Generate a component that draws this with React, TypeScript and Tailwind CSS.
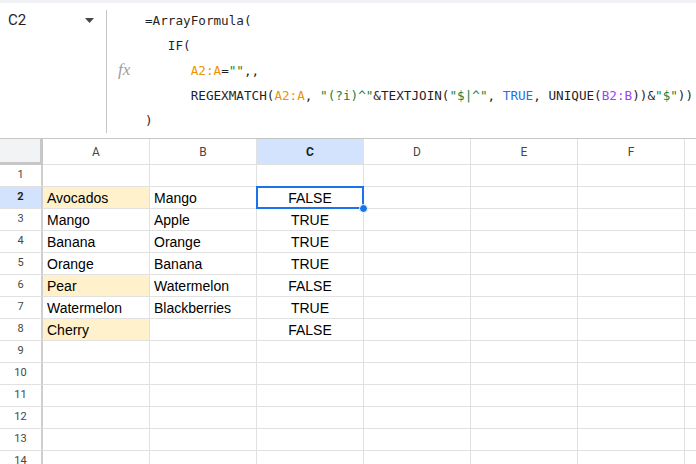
import React from 'react';

type Row = { a?: string; b?: string; c?: string; hl?: boolean };

const data: Row[] = [
  {},
  { a: 'Avocados', b: 'Mango', c: 'FALSE', hl: true },
  { a: 'Mango', b: 'Apple', c: 'TRUE' },
  { a: 'Banana', b: 'Orange', c: 'TRUE' },
  { a: 'Orange', b: 'Banana', c: 'TRUE' },
  { a: 'Pear', b: 'Watermelon', c: 'FALSE', hl: true },
  { a: 'Watermelon', b: 'Blackberries', c: 'TRUE' },
  { a: 'Cherry', c: 'FALSE', hl: true },
  {}, {}, {}, {}, {}, {},
];

const columns = ['A', 'B', 'C', 'D', 'E', 'F', 'G'];

const Ref: React.FC<{ children: React.ReactNode; color?: 'orange' | 'green' | 'blue' | 'purple' }> = ({ children, color }) => {
  const cls =
    color === 'orange' ? 'text-[#f09300]' :
    color === 'green' ? 'text-[#188038]' :
    color === 'blue' ? 'text-[#1a73e8]' :
    color === 'purple' ? 'text-[#a142f4]' : '';
  return <span className={cls}>{children}</span>;
};

const FormulaBar: React.FC = () => (
  <div className="flex h-[139px] border-t-[3px] border-b border-t-[#f0f2f5] border-b-[#c7c7c7] bg-white">
    <div className="w-[106px] h-[34px] flex items-center justify-between pl-[8px] pr-[12px]">
      <span className="text-[15px] text-[#1f1f1f]" style={{ fontFamily: 'Roboto, "Liberation Sans", sans-serif' }}>C2</span>
      <svg width="9" height="5" viewBox="0 0 9 5"><path d="M0 0h9L4.5 5z" fill="#444746" /></svg>
    </div>
    <div className="mt-[7px] h-[123px] w-px bg-[#c4c7c5]" />
    <div className="w-[38px] flex items-center pl-[11px] pb-[2px]">
      <span className="italic text-[17px] text-[#9aa0a6]" style={{ fontFamily: '"Liberation Serif", serif' }}>fx</span>
    </div>
    <pre
      className="pt-[5px] text-[12.65px] leading-[25px] text-[#1f1f1f]"
      style={{ fontFamily: '"DejaVu Sans Mono", "Liberation Mono", monospace' }}
    >
{`=ArrayFormula(
   IF(
      `}<Ref color="orange">A2:A</Ref>=<Ref color="green">""</Ref>{`,,
      REGEXMATCH(`}<Ref color="orange">A2:A</Ref>{`, `}<Ref color="green">"(?i)^"</Ref>{`&TEXTJOIN(`}<Ref color="green">"$|^"</Ref>{`, `}<Ref color="blue">TRUE</Ref>{`, UNIQUE(`}<Ref color="purple">B2:B</Ref>{`))&`}<Ref color="green">"$"</Ref>{`))
)`}
    </pre>
  </div>
);

const Grid: React.FC = () => (
  <div className="text-[14px]" style={{ fontFamily: '"Liberation Sans", Arial, sans-serif' }}>
    <div className="flex h-[26px]">
      <div className="w-[43px] shrink-0 bg-[#f1f3f4] border-r-[3px] border-b-[3px] border-[#c7c7c7]" />
      {columns.map((c) => (
        <div
          key={c}
          className={`w-[107px] shrink-0 flex items-center justify-center border-r border-b border-[#e1e1e1] text-[12px] ${
            c === 'C' ? 'bg-[#d3e3fd] font-bold text-[#1f1f1f]' : 'bg-white text-[#444746]'
          }`}
          style={{ fontFamily: 'Roboto, "Liberation Sans", sans-serif' }}
        >
          {c}
        </div>
      ))}
    </div>
    {data.map((r, i) => {
      const n = i + 1;
      const sel = n === 2;
      return (
        <div key={n} className="flex h-[22px]">
          <div
            className={`w-[43px] shrink-0 flex items-center justify-center border-r-2 border-r-[#cfcfcf] border-b border-b-[#e1e1e1] text-[11px] ${
              sel ? 'bg-[#d3e3fd] font-bold text-[#1f1f1f]' : 'bg-white text-[#444746]'
            }`}
            style={{ fontFamily: 'Roboto, "Liberation Sans", sans-serif' }}
          >
            {n}
          </div>
          <div className={`w-[107px] shrink-0 flex items-center pl-[4px] pt-[2px] border-r border-b border-[#e1e1e1] text-black ${r.hl ? 'bg-[#fef1cc]' : 'bg-white'}`}>
            {r.a}
          </div>
          <div className="w-[107px] shrink-0 flex items-center pl-[4px] pt-[2px] border-r border-b border-[#e1e1e1] text-black">
            {r.b}
          </div>
          <div className="relative w-[107px] shrink-0 flex items-center justify-center pt-[2px] border-r border-b border-[#e1e1e1] text-black">
            {r.c}
            {sel && (
              <>
                <div className="absolute -left-px -top-px w-[108px] h-[23px] border-2 border-[#1a73e8]" />
                <div className="absolute right-[-5px] bottom-[-5px] w-[9px] h-[9px] rounded-full bg-[#1a73e8] border border-white z-10" />
              </>
            )}
          </div>
          {[0, 1, 2, 3].map((k) => (
            <div key={k} className="w-[107px] shrink-0 border-r border-b border-[#e1e1e1]" />
          ))}
        </div>
      );
    })}
  </div>
);

export default function App() {
  return (
    <div className="w-[696px] h-[464px] overflow-hidden bg-white">
      <FormulaBar />
      <Grid />
    </div>
  );
}
